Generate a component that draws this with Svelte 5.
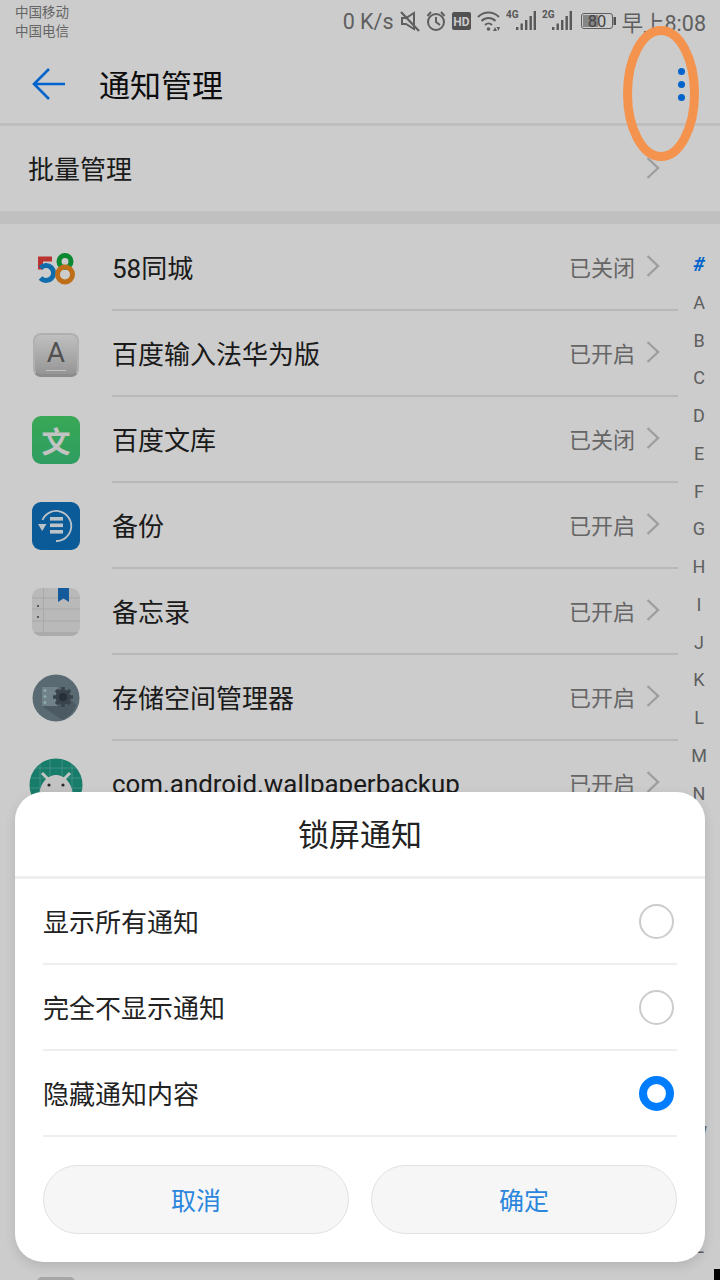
<script>
    const apps = [
        { name: "58同城", state: "已关闭", icon: "58" },
        { name: "百度输入法华为版", state: "已开启", icon: "keyboard" },
        { name: "百度文库", state: "已关闭", icon: "wenku" },
        { name: "备份", state: "已开启", icon: "backup" },
        { name: "备忘录", state: "已开启", icon: "notes" },
        { name: "存储空间管理器", state: "已开启", icon: "storage" },
        { name: "com.android.wallpaperbackup", state: "已开启", icon: "android" }
    ];
    const letters = "#ABCDEFGHIJKLMNOPQRSTUVWXYZ".split("");
    const options = [
        { label: "显示所有通知", checked: false },
        { label: "完全不显示通知", checked: false },
        { label: "隐藏通知内容", checked: true }
    ];
</script>

{#snippet chevron()}
    <svg class="chevron" width="14" height="22" viewBox="0 0 14 22">
        <path d="M1.5 1 L12 11 L1.5 21" fill="none" stroke="#c6c6c6" stroke-width="2.4" />
    </svg>
{/snippet}

{#snippet signal(label)}
    <svg width="30" height="24" viewBox="0 0 30 24">
        <text x="0" y="9" class="net">{label}</text>
        <g fill="#6e6e6e">
            <rect x="10" y="18" width="2.4" height="3" />
            <rect x="14.5" y="14.5" width="2.4" height="6.5" />
            <rect x="19" y="11" width="2.4" height="10" />
            <rect x="23.5" y="7" width="2.4" height="14" />
            <rect x="27.6" y="2" width="2.4" height="19" />
        </g>
    </svg>
{/snippet}

<div class="page">
    <div class="statusbar">
        <div class="carriers">
            <span>中国移动</span>
            <span>中国电信</span>
        </div>
        <div class="status-right">
            <span class="speed">0 K/s</span>
            <svg width="20" height="24" viewBox="0 0 20 24" fill="none" stroke="#777" stroke-width="2">
                <path d="M2 9 H6 L14 4 V20 L6 15 H2 Z" />
                <path d="M1 3 L19 22" stroke-width="2.2" />
            </svg>
            <svg width="20" height="24" viewBox="0 0 20 24" fill="none" stroke="#777" stroke-width="2">
                <circle cx="10" cy="13" r="8" />
                <path d="M10 8 V13 L14 16" />
                <path d="M1.5 7 L5 3 M18.5 7 L15 3" />
            </svg>
            <svg width="19" height="24" viewBox="0 0 19 24">
                <rect x="0" y="3" width="19" height="18" rx="2" fill="#666" />
                <text x="9.5" y="16.5" text-anchor="middle" class="hd">HD</text>
            </svg>
            <svg width="23" height="24" viewBox="0 0 23 24" fill="none" stroke="#777" stroke-width="2">
                <path d="M1 8 C7 2 16 2 22 8" />
                <path d="M4.5 12 C8.5 8 14.5 8 18.5 12" />
                <path d="M8 16 C10 14 13 14 15 16" />
                <circle cx="11.5" cy="20" r="1.8" fill="#777" stroke="none" />
                <path d="M16 22 L18 18 L20 22 Z M19.5 18 L21.5 22 L23 18 Z" fill="#777" stroke="none" />
            </svg>
            {@render signal("4G")}
            {@render signal("2G")}
            <svg width="38" height="24" viewBox="0 0 38 24">
                <rect x="3.5" y="4.5" width="31" height="15" rx="2.5" fill="none" stroke="#777" />
                <rect x="5" y="6" width="15" height="12" fill="#a8a8a8" />
                <rect x="35.5" y="8" width="2.5" height="8" fill="#666" />
                <text x="19" y="17.7" text-anchor="middle" class="batt">80</text>
            </svg>
            <span class="time">早上8:08</span>
        </div>
    </div>

    <header class="toolbar">
        <svg class="back" width="34" height="34" viewBox="0 0 34 34" fill="none" stroke="#007dff" stroke-width="2.6">
            <path d="M33 17 H2 M17 2 L2 17 L17 32" />
        </svg>
        <h1>通知管理</h1>
        <div class="more">
            <i></i><i></i><i></i>
        </div>
    </header>

    <div class="batch">
        <span>批量管理</span>
        {@render chevron()}
    </div>

    <ul class="list">
        {#each apps as app}
            <li class="row">
                <div class="icon">
                    {#if app.icon === "58"}
                        <svg width="48" height="48" viewBox="0 0 48 48" fill="none" stroke-width="5">
                            <path d="M20 15 H8.5 V25.5" stroke="#e8413e" />
                            <path d="M8.5 24 A7.5 7.5 0 1 1 8.5 34" stroke="#1688d8" />
                            <circle cx="33" cy="17.5" r="6" stroke="#0faa3c" />
                            <circle cx="33" cy="30.5" r="7.5" stroke="#ee8a1e" />
                        </svg>
                    {:else if app.icon === "keyboard"}
                        <div class="keycap"><span>A</span></div>
                    {:else if app.icon === "wenku"}
                        <div class="wenku">文</div>
                    {:else if app.icon === "backup"}
                        <svg width="48" height="48" viewBox="0 0 48 48">
                            <rect width="48" height="48" rx="9" fill="#0f72c0" />
                            <path d="M10.5 18 A15 15 0 1 1 24 39" fill="none" stroke="#eaf3fb" stroke-width="1.8" />
                            <path d="M6 22 H14.5 L10.2 29 Z" fill="#eaf3fb" />
                            <g fill="#eaf3fb">
                                <rect x="18" y="15" width="13" height="3.6" />
                                <rect x="18" y="21.5" width="13" height="3.6" />
                                <rect x="18" y="28" width="13" height="3.6" />
                            </g>
                        </svg>
                    {:else if app.icon === "notes"}
                        <svg width="48" height="48" viewBox="0 0 48 48">
                            <defs>
                                <clipPath id="notes-clip"><rect width="48" height="48" rx="9" /></clipPath>
                            </defs>
                            <g clip-path="url(#notes-clip)">
                                <rect width="48" height="48" fill="#e8e8e8" />
                                <rect y="44" width="48" height="4" fill="#d6d6d6" />
                                <path d="M0 10 H48 M0 21 H48 M0 33 H48 M11.5 0 V48" stroke="#d2d2d2" stroke-width="1" />
                                <path d="M26 0 H37 V14 L31.5 10.5 L26 14 Z" fill="#1b72c4" />
                                <circle cx="6" cy="18" r="1.1" fill="#555" />
                                <circle cx="6" cy="29" r="1.1" fill="#555" />
                            </g>
                        </svg>
                    {:else if app.icon === "storage"}
                        <svg width="48" height="48" viewBox="0 0 48 48">
                            <circle cx="24" cy="24" r="23.5" fill="#71858f" />
                            <path d="M10 15 H28 L44 31 A23.5 23.5 0 0 1 30 46 L10 32 Z" fill="#5f717d" />
                            <rect x="10" y="13" width="16" height="19" fill="#8fa3ad" />
                            <g fill="#b5e0d8">
                                <circle cx="13" cy="16.5" r="1.3" />
                                <circle cx="13" cy="22.5" r="1.3" />
                                <circle cx="13" cy="28.5" r="1.3" />
                            </g>
                            <path d="M31 13 V33 M21 23 H41 M24 16 L38 30 M38 16 L24 30" stroke="#46545f" stroke-width="3.5" />
                            <circle cx="31" cy="23" r="7.5" fill="#46545f" />
                            <circle cx="31" cy="23" r="4" fill="#2f3b44" />
                        </svg>
                    {:else if app.icon === "android"}
                        <svg class="android" width="54" height="54" viewBox="0 0 54 54">
                            <defs>
                                <clipPath id="android-clip"><circle cx="27" cy="27" r="26.5" /></clipPath>
                            </defs>
                            <g clip-path="url(#android-clip)">
                                <rect width="54" height="54" fill="#1f9c86" />
                                <path d="M0 10 H54 M0 20 H54 M0 30 H54 M11 0 V54 M21 0 V54 M33 0 V54 M43 0 V54" stroke="#4fb3a3" stroke-width="1" />
                                <path d="M10 40 C10 26 18 17 27 17 C36 17 44 26 44 40 V54 H10 Z" fill="#f4f4f4" />
                                <path d="M13 15 L20 22 M41 15 L34 22" stroke="#f4f4f4" stroke-width="3" />
                                <circle cx="20" cy="27" r="1.6" fill="#333" />
                                <circle cx="34" cy="27" r="1.6" fill="#333" />
                            </g>
                        </svg>
                    {/if}
                </div>
                <div class="row-main">
                    <span class="name" class:latin={app.icon === "android"}>{app.name}</span>
                    <span class="state">{app.state}</span>
                    {@render chevron()}
                </div>
            </li>
        {/each}
    </ul>

    <div class="hidden-rows"></div>
    <div class="last-row"><div class="peek"></div></div>

    <nav class="index">
        {#each letters as letter, i}
            <span class:active={i === 0}>{letter}</span>
        {/each}
    </nav>

    <div class="scrim"></div>

    <section class="dialog">
        <h2>锁屏通知</h2>
        {#each options as opt}
            <div class="option">
                <span>{opt.label}</span>
                <i class="radio" class:checked={opt.checked}></i>
            </div>
        {/each}
        <div class="buttons">
            <button>取消</button>
            <button>确定</button>
        </div>
    </section>

    <svg class="annotation" width="80" height="140" viewBox="0 0 80 140">
        <ellipse cx="38" cy="67.5" rx="33.5" ry="63" fill="none" stroke="#f4934e" stroke-width="9" />
    </svg>
    <div class="corner"></div>
</div>

<style>
    :global(body) {
        margin: 0;
        font-family: Roboto, "Noto Sans CJK SC", sans-serif;
    }
    .page {
        position: relative;
        width: 720px;
        height: 1280px;
        overflow: hidden;
        background: #fff;
        color: #222;
    }
    .statusbar {
        display: flex;
        justify-content: space-between;
        height: 47px;
        padding: 3px 14px 0 15px;
        box-sizing: border-box;
    }
    .carriers {
        display: flex;
        flex-direction: column;
        font-size: 13.5px;
        line-height: 19px;
        color: #808080;
    }
    .status-right {
        display: flex;
        align-items: center;
        gap: 6px;
        height: 36px;
        color: #777;
    }
    .speed {
        font-size: 21.5px;
    }
    .time {
        font-size: 21.5px;
    }
    .net {
        font: bold 10px Roboto, sans-serif;
        fill: #6e6e6e;
    }
    .hd {
        font: bold 12px Roboto, sans-serif;
        fill: #fff;
    }
    .batt {
        font: 16.5px Roboto, sans-serif;
        fill: #555;
    }
    .toolbar {
        display: flex;
        align-items: center;
        height: 79px;
        padding: 0 35px 2px 32px;
        box-sizing: border-box;
        border-bottom: 3px solid #eee;
    }
    .back {
        margin-right: 33px;
    }
    h1 {
        flex: 1;
        margin: 0 0 2px;
        font-size: 31px;
        font-weight: 400;
        color: #111;
    }
    .more {
        display: flex;
        flex-direction: column;
        gap: 6px;
    }
    .more i {
        width: 7px;
        height: 7px;
        border-radius: 50%;
        background: #007dff;
    }
    .batch {
        display: flex;
        align-items: center;
        justify-content: space-between;
        height: 98px;
        padding: 0 60px 2px 28px;
        box-sizing: border-box;
        font-size: 26px;
        border-bottom: 13px solid #f0f0f0;
    }
    .list {
        margin: 0;
        padding: 1px 0 0;
        list-style: none;
    }
    .row {
        display: flex;
        align-items: center;
        height: 86px;
    }
    .icon {
        display: flex;
        align-items: center;
        justify-content: center;
        width: 48px;
        height: 48px;
        margin: 0 32px;
    }
    .keycap {
        display: flex;
        align-items: center;
        justify-content: center;
        width: 46px;
        height: 44px;
        margin-top: 2px;
        box-sizing: border-box;
        border: 2px solid #dcdcdc;
        border-bottom: 3px solid #b0b0b0;
        border-radius: 8px;
        background: linear-gradient(#f0f0f0, #bcbcbc);
        font: 28px Roboto, sans-serif;
        color: #666;
    }
    .keycap span {
        width: 20px;
        text-align: center;
        line-height: 28px;
        border-bottom: 1px solid #f4f4f4;
        padding-bottom: 3px;
    }
    .wenku {
        display: flex;
        align-items: center;
        justify-content: center;
        width: 48px;
        height: 48px;
        border-radius: 9px;
        background: linear-gradient(#48d26b, #3ac57a);
        color: #f4f4f4;
        font-size: 29px;
        font-weight: 700;
    }
    .android {
        flex: none;
        margin-top: 1px;
    }
    .row-main {
        flex: 1;
        display: flex;
        align-items: center;
        align-self: stretch;
        margin-right: 42px;
        padding-right: 18px;
        padding-bottom: 2px;
        border-bottom: 2px solid #e6e6e6;
    }
    .name {
        flex: 1;
        font-size: 26px;
    }
    .name.latin {
        padding-top: 4px;
        font-size: 25.9px;
    }
    .state {
        margin-right: 11px;
        font-size: 22px;
        color: #808080;
    }
    .hidden-rows {
        height: 429px;
    }
    .last-row {
        height: 86px;
        padding: 21px 0 0 37px;
        box-sizing: border-box;
    }
    .peek {
        width: 38px;
        height: 38px;
        border-radius: 5px;
        background: #d0d0d0;
    }
    .index {
        position: absolute;
        top: 246px;
        right: 0;
        width: 42px;
        display: flex;
        flex-direction: column;
        align-items: center;
    }
    .index span {
        height: 37.75px;
        line-height: 37.75px;
        font-size: 18px;
        color: #777;
    }
    .index .active {
        font-size: 20px;
        font-weight: 700;
        font-style: italic;
        color: #007dff;
    }
    .scrim {
        position: absolute;
        inset: 0;
        background: rgba(0, 0, 0, 0.2);
    }
    .dialog {
        position: absolute;
        left: 15px;
        right: 15px;
        top: 792px;
        height: 470px;
        padding: 0 28px;
        box-sizing: border-box;
        border-radius: 28px;
        background: #fff;
        box-shadow: 0 4px 12px rgba(0, 0, 0, 0.12);
    }
    h2 {
        display: flex;
        align-items: center;
        justify-content: center;
        height: 80px;
        margin: 0 -28px;
        padding-bottom: 4px;
        font-size: 31px;
        font-weight: 400;
        border-bottom: 3px solid #eee;
    }
    .option {
        display: flex;
        align-items: center;
        justify-content: space-between;
        height: 86px;
        padding-bottom: 2px;
        box-sizing: border-box;
        font-size: 26px;
        border-bottom: 2px solid #eee;
    }
    .radio {
        width: 35px;
        height: 35px;
        margin: 2px 3px 0 0;
        box-sizing: border-box;
        border: 2px solid #ccc;
        border-radius: 50%;
    }
    .radio.checked {
        border: 8px solid #007dff;
    }
    .buttons {
        display: flex;
        gap: 22px;
        margin-top: 28px;
    }
    button {
        flex: 1;
        height: 69px;
        padding: 0 0 1px;
        border: 1px solid #e2e2e2;
        border-radius: 35px;
        background: #f6f6f6;
        font: 25px Roboto, "Noto Sans CJK SC", sans-serif;
        color: #2a86dc;
    }
    .annotation {
        position: absolute;
        left: 623px;
        top: 26px;
    }
    .corner {
        position: absolute;
        right: 0;
        bottom: 0;
        width: 6px;
        height: 11px;
        background: #000;
    }
</style>
